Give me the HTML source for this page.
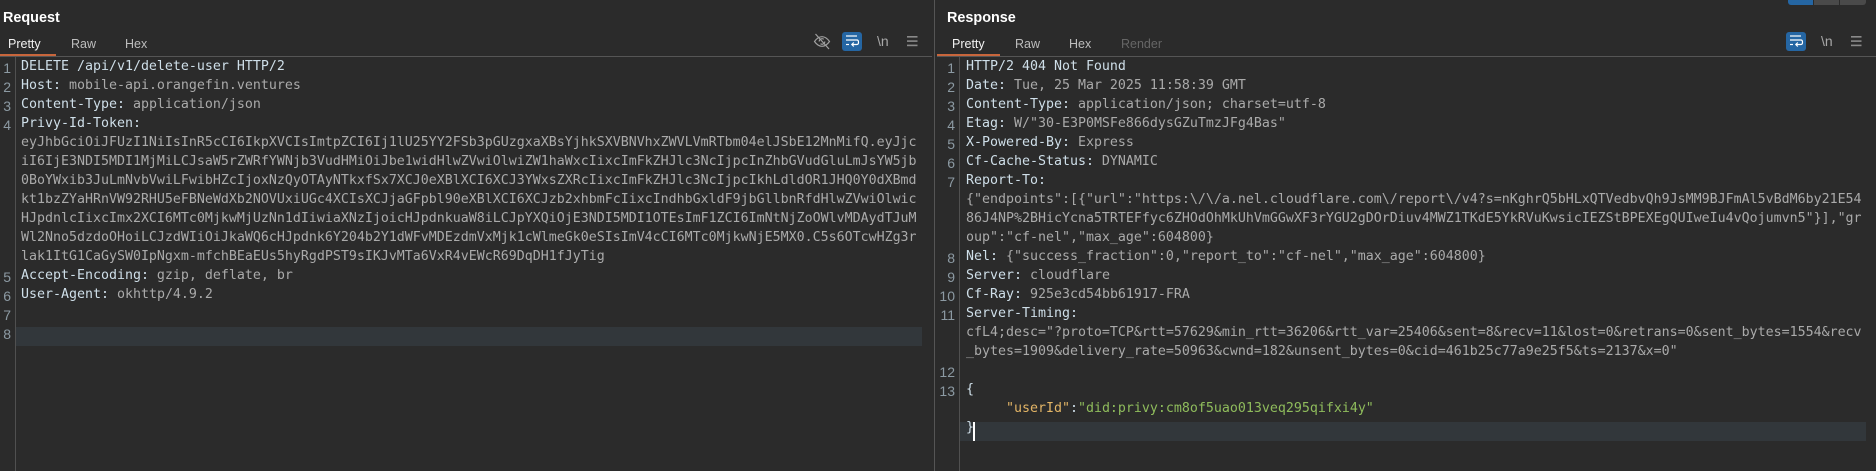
<!DOCTYPE html>
<html lang="en">
<head>
<meta charset="utf-8">
<title>Request / Response</title>
<style>
html,body{margin:0;padding:0;background:#2b2b2b;width:1876px;height:471px;overflow:hidden;}
body{position:relative;font-family:"Liberation Sans",sans-serif;}
.a{position:absolute;}
.title{top:9px;font-weight:bold;font-size:14.4px;line-height:18px;color:#fff;}
.tab{top:36px;font-size:12.5px;line-height:16px;color:#bdbdbd;}
.hline{height:1px;top:56px;background:#555;}
.orange{height:2px;top:54px;background:#c8663c;}
.vline{width:1px;background:#505050;}
.hl{height:19px;background:#32373b;}
.code{top:57px;font-family:"DejaVu Sans Mono","Liberation Mono",monospace;font-size:13.29px;line-height:19px;color:#aaaaaa;}
.code div{height:19px;white-space:pre;}
.k{color:#cfdfe9;}
.n{width:30px;text-align:right;font-size:14px;line-height:19px;color:#8c9aa3;}
.btn{width:20px;height:19px;top:32px;border-radius:3px;background:#2566a3;}
.nl{top:33px;font-size:14px;line-height:16px;color:#a8a8a8;}
</style>
</head>
<body>
<!-- top right buttons -->
<div class="a" style="left:1788px;top:0;width:25px;height:5px;background:#2566a3;border-bottom-left-radius:3px;"></div>
<div class="a" style="left:1814px;top:0;width:25px;height:5px;background:#4a4a4a;"></div>
<div class="a" style="left:1840px;top:0;width:26px;height:5px;background:#4a4a4a;border-bottom-right-radius:3px;"></div>

<!-- pane divider -->
<div class="a vline" style="left:934px;top:0;height:471px;background:#555;"></div>

<!-- headers -->
<div class="a title" style="left:3px;">Request</div>
<div class="a title" style="left:947px;">Response</div>

<div class="a tab" style="left:8px;color:#f2f2f2;">Pretty</div>
<div class="a tab" style="left:71px;">Raw</div>
<div class="a tab" style="left:125px;">Hex</div>
<div class="a tab" style="left:952px;color:#f2f2f2;">Pretty</div>
<div class="a tab" style="left:1015px;">Raw</div>
<div class="a tab" style="left:1069px;">Hex</div>
<div class="a tab" style="left:1121px;color:#666;">Render</div>

<div class="a hline" style="left:0;width:932px;"></div>
<div class="a hline" style="left:937px;width:939px;"></div>
<div class="a orange" style="left:0;width:56px;"></div>
<div class="a orange" style="left:937px;width:63px;"></div>

<!-- request toolbar -->
<svg class="a" style="left:813px;top:33px;" width="18" height="17" viewBox="0 0 18 17" fill="none" stroke="#a0a0a0" stroke-width="1.2">
<path d="M1.5 8.5C4 5 6.5 3.7 9 3.7s5 1.3 7.5 4.800C14 12 11.500 13.300 9 13.300S4 12 1.500 8.500Z"/>
<path d="M6.200 8.500a2.800 2.800 0 0 1 4.500-2.200M11.800 8.500a2.800 2.800 0 0 1-4.300 2.300"/>
<path d="M2.500 1l13.500 15"/>
</svg>
<div class="a btn" style="left:842px;"></div>
<svg class="a" style="left:842px;top:32px;" width="20" height="19" viewBox="0 0 20 19" fill="none" stroke="#fff" stroke-width="1.200">
<path d="M4 4h11"/>
<path d="M4 8h11c2 0 2 4.500 0 4.500H10"/>
<path d="M11.800 10.500L9.800 12.500l2 2"/>
<path d="M4 12.500h3"/>
</svg>
<div class="a nl" style="left:877px;">\n</div>
<svg class="a" style="left:907px;top:36px;" width="11" height="11" viewBox="0 0 11 11" fill="#8a8a8a">
<rect x="0" y="0" width="10.500" height="1.600"/><rect x="0" y="4.300" width="10.500" height="1.600"/><rect x="0" y="8.600" width="10.500" height="1.600"/>
</svg>

<!-- response toolbar -->
<div class="a btn" style="left:1786px;"></div>
<svg class="a" style="left:1786px;top:32px;" width="20" height="19" viewBox="0 0 20 19" fill="none" stroke="#fff" stroke-width="1.200">
<path d="M4 4h11"/>
<path d="M4 8h11c2 0 2 4.500 0 4.500H10"/>
<path d="M11.800 10.500L9.800 12.500l2 2"/>
<path d="M4 12.500h3"/>
</svg>
<div class="a nl" style="left:1821px;">\n</div>
<svg class="a" style="left:1851px;top:36px;" width="11" height="11" viewBox="0 0 11 11" fill="#8a8a8a">
<rect x="0" y="0" width="10.500" height="1.600"/><rect x="0" y="4.300" width="10.500" height="1.600"/><rect x="0" y="8.600" width="10.500" height="1.600"/>
</svg>

<!-- gutters -->
<div class="a vline" style="left:15px;top:57px;height:414px;"></div>
<div class="a vline" style="left:959px;top:57px;height:414px;"></div>

<!-- highlights -->
<div class="a hl" style="left:16px;top:327px;width:906px;"></div>
<div class="a hl" style="left:960px;top:422px;width:906px;"></div>

<!-- request numbers -->
<div class="a n" style="left:-19px;top:59px;">1</div>
<div class="a n" style="left:-19px;top:78px;">2</div>
<div class="a n" style="left:-19px;top:97px;">3</div>
<div class="a n" style="left:-19px;top:116px;">4</div>
<div class="a n" style="left:-19px;top:268px;">5</div>
<div class="a n" style="left:-19px;top:287px;">6</div>
<div class="a n" style="left:-19px;top:306px;">7</div>
<div class="a n" style="left:-19px;top:325px;">8</div>

<!-- request code -->
<div class="a code" style="left:21px;">
<div><span class="k">DELETE /api/v1/delete-user HTTP/2</span></div>
<div><span class="k">Host:</span> mobile-api.orangefin.ventures</div>
<div><span class="k">Content-Type:</span> application/json</div>
<div><span class="k">Privy-Id-Token:</span></div>
<div>eyJhbGciOiJFUzI1NiIsInR5cCI6IkpXVCIsImtpZCI6Ij1lU25YY2FSb3pGUzgxaXBsYjhkSXVBNVhxZWVLVmRTbm04elJSbE12MnMifQ.eyJjc</div>
<div>iI6IjE3NDI5MDI1MjMiLCJsaW5rZWRfYWNjb3VudHMiOiJbe1widHlwZVwiOlwiZW1haWxcIixcImFkZHJlc3NcIjpcInZhbGVudGluLmJsYW5jb</div>
<div>0BoYWxib3JuLmNvbVwiLFwibHZcIjoxNzQyOTAyNTkxfSx7XCJ0eXBlXCI6XCJ3YWxsZXRcIixcImFkZHJlc3NcIjpcIkhLdldOR1JHQ0Y0dXBmd</div>
<div>kt1bzZYaHRnVW92RHU5eFBNeWdXb2NOVUxiUGc4XCIsXCJjaGFpbl90eXBlXCI6XCJzb2xhbmFcIixcIndhbGxldF9jbGllbnRfdHlwZVwiOlwic</div>
<div>HJpdnlcIixcImx2XCI6MTc0MjkwMjUzNn1dIiwiaXNzIjoicHJpdnkuaW8iLCJpYXQiOjE3NDI5MDI1OTEsImF1ZCI6ImNtNjZoOWlvMDAydTJuM</div>
<div>Wl2Nno5dzdoOHoiLCJzdWIiOiJkaWQ6cHJpdnk6Y204b2Y1dWFvMDEzdmVxMjk1cWlmeGk0eSIsImV4cCI6MTc0MjkwNjE5MX0.C5s6OTcwHZg3r</div>
<div>lak1ItG1CaGySW0IpNgxm-mfchBEaEUs5hyRgdPST9sIKJvMTa6VxR4vEWcR69DqDH1fJyTig</div>
<div><span class="k">Accept-Encoding:</span> gzip, deflate, br</div>
<div><span class="k">User-Agent:</span> okhttp/4.9.2</div>
</div>

<!-- response numbers -->
<div class="a n" style="left:925px;top:59px;">1</div>
<div class="a n" style="left:925px;top:78px;">2</div>
<div class="a n" style="left:925px;top:97px;">3</div>
<div class="a n" style="left:925px;top:116px;">4</div>
<div class="a n" style="left:925px;top:135px;">5</div>
<div class="a n" style="left:925px;top:154px;">6</div>
<div class="a n" style="left:925px;top:173px;">7</div>
<div class="a n" style="left:925px;top:249px;">8</div>
<div class="a n" style="left:925px;top:268px;">9</div>
<div class="a n" style="left:925px;top:287px;">10</div>
<div class="a n" style="left:925px;top:306px;">11</div>
<div class="a n" style="left:925px;top:363px;">12</div>
<div class="a n" style="left:925px;top:382px;">13</div>

<!-- response code -->
<div class="a code" style="left:966px;">
<div><span class="k">HTTP/2 404 Not Found</span></div>
<div><span class="k">Date:</span> Tue, 25 Mar 2025 11:58:39 GMT</div>
<div><span class="k">Content-Type:</span> application/json; charset=utf-8</div>
<div><span class="k">Etag:</span> W/"30-E3P0MSFe866dysGZuTmzJFg4Bas"</div>
<div><span class="k">X-Powered-By:</span> Express</div>
<div><span class="k">Cf-Cache-Status:</span> DYNAMIC</div>
<div><span class="k">Report-To:</span></div>
<div>{"endpoints":[{"url":"https:\/\/a.nel.cloudflare.com\/report\/v4?s=nKghrQ5bHLxQTVedbvQh9JsMM9BJFmAl5vBdM6by21E54</div>
<div>86J4NP%2BHicYcna5TRTEFfyc6ZHOdOhMkUhVmGGwXF3rYGU2gDOrDiuv4MWZ1TKdE5YkRVuKwsicIEZStBPEXEgQUIweIu4vQojumvn5"}],"gr</div>
<div>oup":"cf-nel","max_age":604800}</div>
<div><span class="k">Nel:</span> {"success_fraction":0,"report_to":"cf-nel","max_age":604800}</div>
<div><span class="k">Server:</span> cloudflare</div>
<div><span class="k">Cf-Ray:</span> 925e3cd54bb61917-FRA</div>
<div><span class="k">Server-Timing:</span></div>
<div>cfL4;desc="?proto=TCP&amp;rtt=57629&amp;min_rtt=36206&amp;rtt_var=25406&amp;sent=8&amp;recv=11&amp;lost=0&amp;retrans=0&amp;sent_bytes=1554&amp;recv</div>
<div>_bytes=1909&amp;delivery_rate=50963&amp;cwnd=182&amp;unsent_bytes=0&amp;cid=461b25c77a9e25f5&amp;ts=2137&amp;x=0"</div>
<div></div>
<div><span class="k">{</span></div>
<div>     <span style="color:#e3b566;">"userId"</span><span class="k">:</span><span style="color:#8fbc5c;">"did:privy:cm8of5uao013veq295qifxi4y"</span></div>
<div><span class="k">}</span></div>
</div>

<!-- caret -->
<div class="a" style="left:973px;top:422px;width:2px;height:19px;background:#fff;"></div>
</body>
</html>
